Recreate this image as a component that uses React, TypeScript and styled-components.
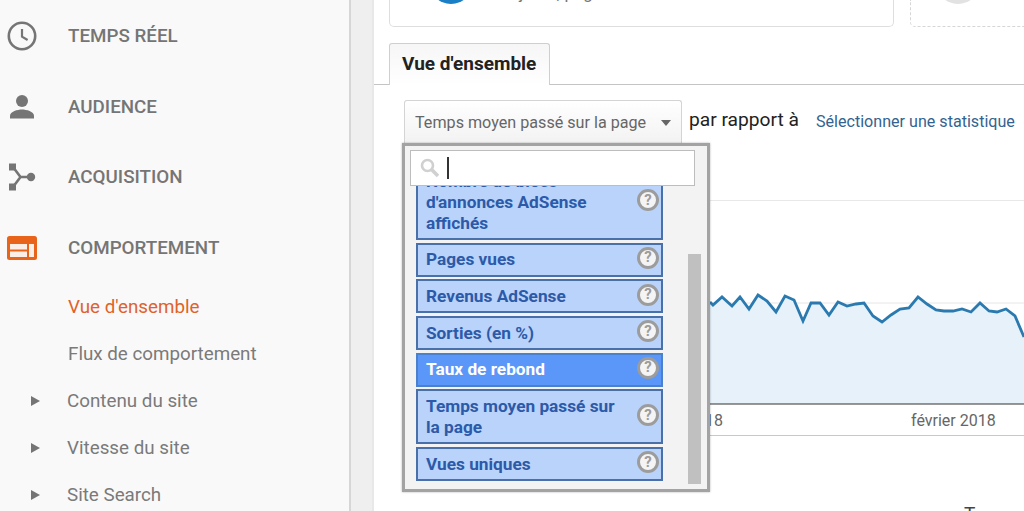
import React from 'react';
import styled, { createGlobalStyle } from 'styled-components';

const GlobalStyle = createGlobalStyle`
  html, body {
    margin: 0;
    padding: 0;
    background: #fff;
    font-family: Roboto, "Liberation Sans", sans-serif;
  }
`;

const Page = styled.div`
  display: flex;
  width: 1024px;
  height: 511px;
  overflow: hidden;
`;

const Sidebar = styled.nav`
  flex: 0 0 351px;
  box-sizing: border-box;
  padding-top: 1px;
  background: #f9f9f9;
  border-right: 2px solid #d6d6d6;
`;

const NavItem = styled.div`
  display: flex;
  align-items: center;
  height: 70.5px;
  color: #757575;
  font-size: 18.8px;
  font-weight: 500;
`;

const NavIcon = styled.span`
  display: flex;
  justify-content: center;
  width: 44px;
  margin-right: 24px;
`;

const SubItem = styled.div<{ $active?: boolean; $nested?: boolean }>`
  display: flex;
  align-items: center;
  height: 47px;
  padding-left: ${(p) => (p.$nested ? '31px' : '68px')};
  color: ${(p) => (p.$active ? '#e0622a' : '#7a7a7a')};
  font-size: 18.8px;
`;

const Arrow = styled.span`
  width: 0;
  height: 0;
  margin-right: 27px;
  border-left: 9px solid #757575;
  border-top: 5.5px solid transparent;
  border-bottom: 5.5px solid transparent;
`;

const Gutter = styled.div`
  flex: 0 0 23px;
  box-sizing: border-box;
  background: #efefef;
  border-right: 2px solid #e8e8e8;
`;

const Main = styled.main`
  position: relative;
  flex: 1;
  min-width: 0;
`;

const TopCards = styled.div`
  display: flex;
  gap: 16px;
  height: 27px;
  padding-left: 15px;
`;

const Card = styled.div<{ $dashed?: boolean }>`
  display: flex;
  align-items: flex-end;
  flex: ${(p) => (p.$dashed ? '0 0 130px' : '0 0 505px')};
  box-sizing: border-box;
  overflow: hidden;
  border: 1px ${(p) => (p.$dashed ? 'dashed #d6d6d6' : 'solid #dedede')};
  border-top: 0;
  border-radius: 0 0 5px 5px;
`;

const CardCircle = styled.span<{ $color: string; $left: number }>`
  flex: none;
  width: 44px;
  height: 44px;
  margin: 0 0 22px ${(p) => p.$left}px;
  border-radius: 50%;
  background: ${(p) => p.$color};
`;

const CardText = styled.span`
  margin: 0 0 25px 25px;
  color: #757575;
  font-size: 17px;
  line-height: 15px;
  white-space: nowrap;
`;

const TabBar = styled.div`
  display: flex;
  height: 41px;
  margin-top: 16px;
  padding-left: 15px;
  border-bottom: 1px solid #c4c4c4;
`;

const Tab = styled.div`
  display: flex;
  align-items: center;
  box-sizing: border-box;
  width: 161px;
  height: 42px;
  padding: 0 0 2px 12px;
  background: linear-gradient(#f6f6f6, #fff);
  border: 1px solid #cfcfcf;
  border-bottom: 0;
  border-radius: 3px 3px 0 0;
  color: #222;
  font-size: 19px;
  font-weight: 700;
`;

const Controls = styled.div`
  display: flex;
  align-items: flex-start;
  height: 100px;
  margin-top: 15px;
  padding-left: 30px;
`;

const MetricSelect = styled.div`
  display: flex;
  align-items: center;
  justify-content: space-between;
  box-sizing: border-box;
  width: 278px;
  height: 44px;
  padding: 0 10px 0 10px;
  background: linear-gradient(#fff, #f2f2f2);
  border: 1px solid #d4d4d4;
  border-bottom: 0;
  border-radius: 3px 3px 0 0;
  color: #666;
  font-size: 16.15px;
`;

const Caret = styled.span`
  width: 0;
  height: 0;
  border-top: 6px solid #666;
  border-left: 5.5px solid transparent;
  border-right: 5.5px solid transparent;
`;

const CompareLabel = styled.span`
  margin: 8px 0 0 7px;
  color: #222;
  font-size: 19.2px;
  line-height: 24px;
`;

const CompareLink = styled.span`
  margin: 11px 0 0 17px;
  color: #34638f;
  font-size: 16.1px;
  line-height: 22px;
`;

const ChartFrame = styled.div`
  height: 234px;
  margin-left: 28px;
  border-top: 1px solid #e8e8e8;
  border-bottom: 1px solid #c8c8c8;
`;

const ChartSvg = styled.svg`
  display: block;
  width: 622px;
  height: 234px;
`;

const NextHeading = styled.div`
  margin-top: 68px;
  padding-left: 590px;
  color: #444;
  font-size: 19px;
  line-height: 20px;
`;

const Dropdown = styled.div`
  position: absolute;
  top: 143px;
  left: 28px;
  box-sizing: border-box;
  width: 308px;
  height: 349px;
  padding: 4px 0 0 5px;
  background: #f3f3f3;
  border: 3px solid #a3a3a3;
  box-shadow: 0 0 2px rgba(0, 0, 0, 0.3);
`;

const SearchBox = styled.div`
  position: relative;
  z-index: 1;
  display: flex;
  align-items: center;
  box-sizing: border-box;
  width: 285px;
  height: 36px;
  padding-left: 8px;
  background: #fff;
  border: 1px solid #bdbdbd;
`;

const TextCursor = styled.span`
  width: 2px;
  height: 22px;
  margin-left: 6px;
  background: #333;
`;

const ListRow = styled.div`
  display: flex;
  height: 325px;
  margin-top: -22px;
  padding-left: 6px;
`;

const OptionList = styled.div`
  display: flex;
  flex-direction: column;
  gap: 2.7px;
  width: 247px;
`;

const Option = styled.div<{ $selected?: boolean }>`
  display: flex;
  align-items: center;
  justify-content: space-between;
  box-sizing: border-box;
  padding: 4.7px 2px 4.3px 8px;
  background: ${(p) => (p.$selected ? '#5a97f8' : '#b9d3fb')};
  border: 2px solid ${(p) => (p.$selected ? '#4a80cc' : '#4a70aa')};
  color: ${(p) => (p.$selected ? '#fff' : '#2c5aa8')};
  font-size: 17.25px;
  font-weight: 700;
  line-height: 21px;
`;

const OptionLabel = styled.span`
  width: 198px;
`;

const HelpIcon = styled.span`
  flex: none;
  display: flex;
  align-items: center;
  justify-content: center;
  box-sizing: border-box;
  width: 22px;
  height: 22px;
  margin-top: -4px;
  background: #f4f4f4;
  border: 3px solid #9c9c9c;
  border-radius: 50%;
  color: #9c9c9c;
  font-size: 15px;
  font-weight: 700;
  line-height: 1;
`;

const Scrollbar = styled.div`
  flex: none;
  align-self: flex-end;
  width: 13px;
  height: 230px;
  margin: 0 0 5px 25px;
  background: #c0c0c0;
`;

const ClockIcon = () => (
  <svg width="30" height="30" viewBox="0 0 30 30" fill="none" stroke="#757575">
    <circle cx="15" cy="15" r="13.2" strokeWidth="2.6" />
    <path d="M15 8v7.6l5.6 3.4" strokeWidth="2.2" />
  </svg>
);

const PersonIcon = () => (
  <svg width="26" height="26" viewBox="0 0 26 26" fill="#757575">
    <circle cx="13" cy="7" r="6" />
    <path d="M1 24.5v-2.5c0-4.4 7.6-6.4 12-6.4s12 2 12 6.4v2.5z" />
  </svg>
);

const AcquisitionIcon = () => (
  <svg width="30" height="30" viewBox="0 0 30 30" fill="#757575">
    <path d="M2 1.5h7v7H2zM2 21.5h7v7H2z" />
    <circle cx="24" cy="15" r="4.2" />
    <path d="M6 5l7.5 10L6 25M13.5 15H24" fill="none" stroke="#757575" strokeWidth="2.6" />
  </svg>
);

const BehaviorIcon = () => (
  <svg width="30" height="24" viewBox="0 0 30 24">
    <rect width="30" height="24" rx="2.5" fill="#e8641b" />
    <path d="M3 8h17v5.5H3zM3 15.5h17V21H3zM22 8h5v13h-5z" fill="#fbeee6" />
  </svg>
);

const SearchIcon = () => (
  <svg width="22" height="22" viewBox="0 0 22 22" fill="none" stroke="#d0d0d0">
    <circle cx="8.5" cy="8.5" r="5.5" strokeWidth="2.6" />
    <path d="M12.8 12.8l6.2 6.2" strokeWidth="3.6" />
  </svg>
);

const chartPoints = [
  [710, 302], [713, 305], [722, 297], [732, 306], [740, 297], [749, 309], [758, 295], [767, 301], [776, 312],
  [785, 296], [794, 300], [803, 321], [811, 303], [820, 303], [829, 315], [838, 302], [847, 306], [856, 304],
  [864, 303], [873, 316], [882, 322], [891, 315], [900, 309], [909, 308], [918, 297], [927, 304], [936, 310],
  [944, 311], [953, 311], [962, 309], [971, 312], [980, 303], [989, 311], [997, 312], [1006, 309], [1015, 316],
  [1024, 337],
];

// chart svg starts at x=402, y=201 on the page
const toChart = ([x, y]: number[]) => `${x - 402},${y - 201}`;
const linePath = chartPoints.map(toChart).join(' ');
const areaPath = `${linePath} 622,203 308,203`;

const options: { label: string; selected?: boolean }[] = [
  { label: "Nombre de blocs d'annonces AdSense affichés" },
  { label: 'Pages vues' },
  { label: 'Revenus AdSense' },
  { label: 'Sorties (en %)' },
  { label: 'Taux de rebond', selected: true },
  { label: 'Temps moyen passé sur la page' },
  { label: 'Vues uniques' },
];

export default function App() {
  return (
    <Page>
      <GlobalStyle />
      <Sidebar>
        <NavItem><NavIcon><ClockIcon /></NavIcon>TEMPS RÉEL</NavItem>
        <NavItem><NavIcon><PersonIcon /></NavIcon>AUDIENCE</NavItem>
        <NavItem><NavIcon><AcquisitionIcon /></NavIcon>ACQUISITION</NavItem>
        <NavItem><NavIcon><BehaviorIcon /></NavIcon>COMPORTEMENT</NavItem>
        <SubItem $active>Vue d'ensemble</SubItem>
        <SubItem>Flux de comportement</SubItem>
        <SubItem $nested><Arrow />Contenu du site</SubItem>
        <SubItem $nested><Arrow />Vitesse du site</SubItem>
        <SubItem $nested><Arrow />Site Search</SubItem>
      </Sidebar>
      <Gutter />
      <Main>
        <TopCards>
          <Card>
            <CardCircle $color="#1a7fc4" $left={39} />
            <CardText>Objectif, pages vues</CardText>
          </Card>
          <Card $dashed>
            <CardCircle $color="#e2e2e2" $left={25} />
          </Card>
        </TopCards>
        <TabBar>
          <Tab>Vue d'ensemble</Tab>
        </TabBar>
        <Controls>
          <MetricSelect>
            Temps moyen passé sur la page
            <Caret />
          </MetricSelect>
          <CompareLabel>par rapport à</CompareLabel>
          <CompareLink>Sélectionner une statistique</CompareLink>
        </Controls>
        <ChartFrame>
          <ChartSvg viewBox="0 0 622 234">
            <line x1="308" y1="102" x2="622" y2="102" stroke="#e6e6e6" />
            <polygon points={areaPath} fill="#e6f1f9" />
            <polyline points={linePath} fill="none" stroke="#2a7ab0" strokeWidth="2.8" />
            <line x1="308" y1="203" x2="622" y2="203" stroke="#333" strokeWidth="1.2" />
            <text x="321" y="225" textAnchor="end" fontSize="16" fill="#666" fontFamily="Roboto, sans-serif">2018</text>
            <text x="509" y="225" fontSize="16" fill="#666" fontFamily="Roboto, sans-serif">février 2018</text>
          </ChartSvg>
        </ChartFrame>
        <NextHeading>T</NextHeading>
        <Dropdown>
          <SearchBox>
            <SearchIcon />
            <TextCursor />
          </SearchBox>
          <ListRow>
            <OptionList>
              {options.map((o) => (
                <Option key={o.label} $selected={o.selected}>
                  <OptionLabel>{o.label}</OptionLabel>
                  <HelpIcon>?</HelpIcon>
                </Option>
              ))}
            </OptionList>
            <Scrollbar />
          </ListRow>
        </Dropdown>
      </Main>
    </Page>
  );
}
